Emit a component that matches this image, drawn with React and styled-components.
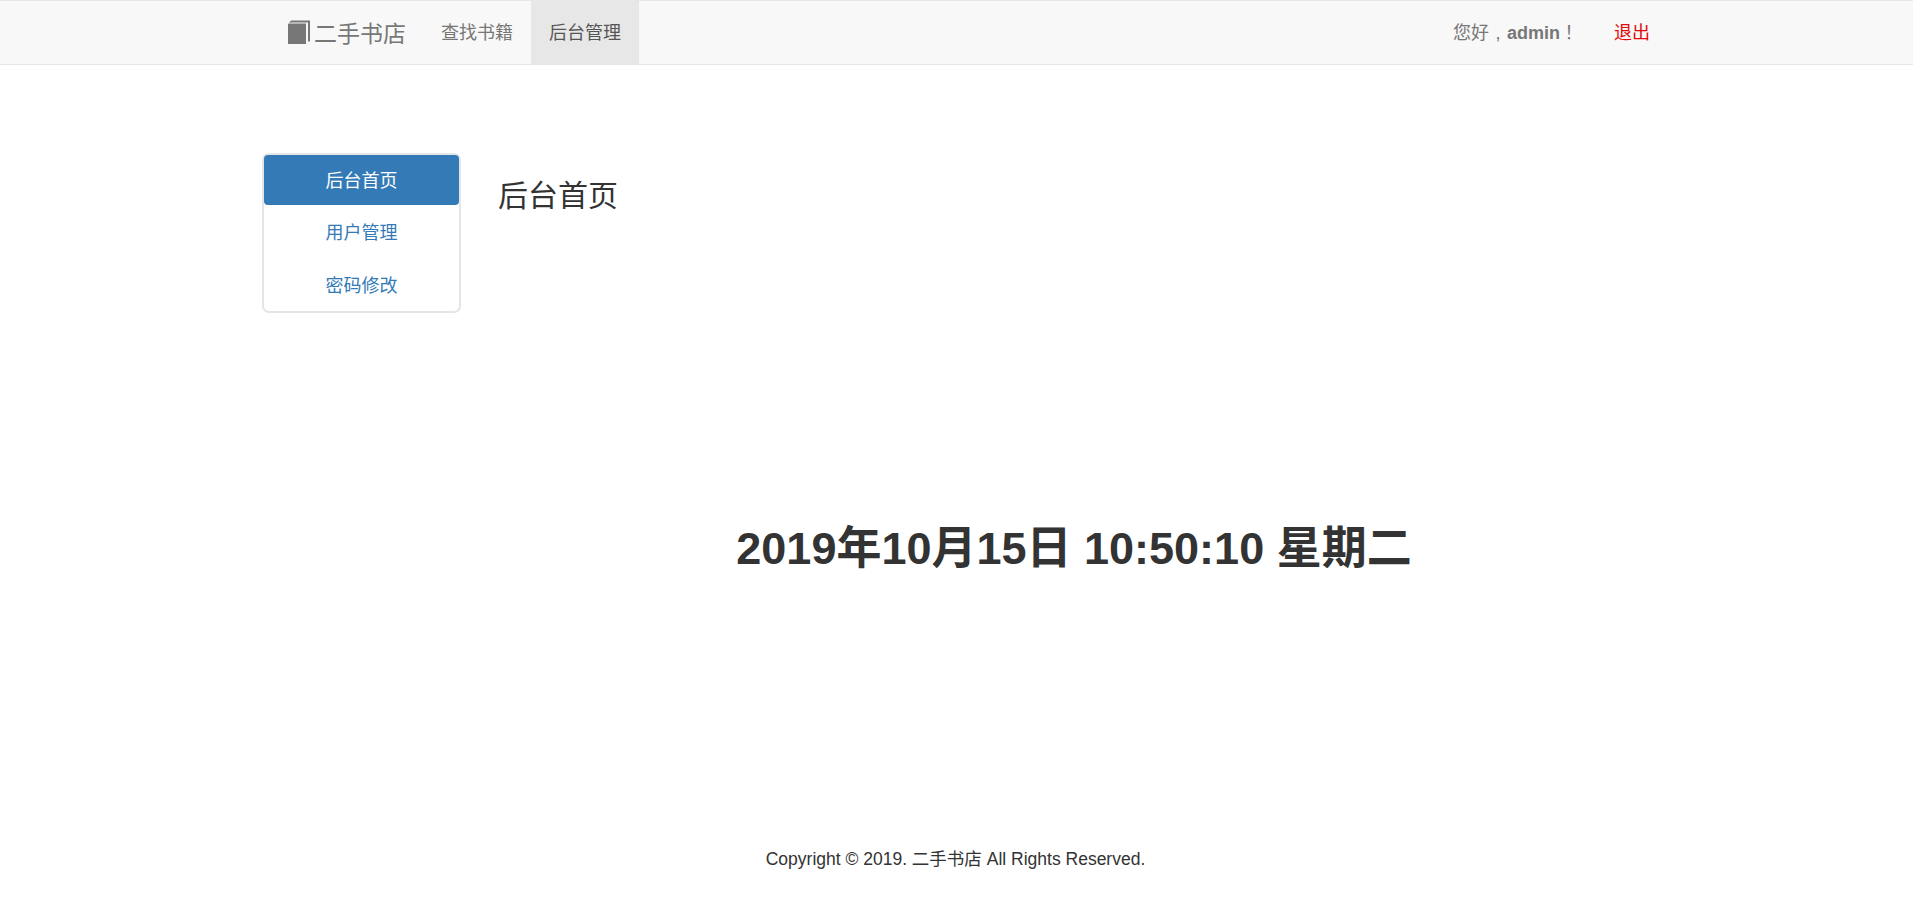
import React from "react";
import styled, { createGlobalStyle } from "styled-components";

const GlobalStyle = createGlobalStyle`
  html, body {
    margin: 0;
    padding: 0;
    background: #fff;
    color: #333;
    font-family: "Liberation Sans", "Noto Sans CJK SC", sans-serif;
    font-size: 18px;
  }
  * { box-sizing: border-box; }
`;

const Navbar = styled.nav`
  height: 65px;
  background: #f8f8f8;
  border-top: 1px solid #e7e7e7;
  border-bottom: 1px solid #e7e7e7;
`;

const NavInner = styled.div`
  display: flex;
  align-items: stretch;
  height: 100%;
  padding: 0 263px 0 288px;
`;

const Brand = styled.a`
  display: flex;
  align-items: center;
  gap: 4px;
  padding: 0 17px 2px 0;
  font-size: 23px;
  color: #777;
`;

const NavItem = styled.a`
  display: flex;
  align-items: center;
  padding: 0 18px 4px;
  font-size: 18px;
  color: ${(p) => (p.$active ? "#555" : "#777")};
  background: ${(p) => (p.$active ? "#e7e7e7" : "transparent")};
`;

const UserBox = styled.div`
  margin-left: auto;
  display: flex;
  align-items: center;
  gap: 36px;
  padding-bottom: 4px;
  font-size: 18px;
  color: #777;

  b { font-weight: 700; }
`;

const Comma = styled.span`
  padding: 0 6.5px;
`;

const Bang = styled.span`
  font-family: "Noto Sans CJK TC", sans-serif;
`;

const Logout = styled.a`
  color: #e00b0b;
`;

const Body = styled.div`
  display: grid;
  grid-template-columns: 199px 1fr;
  column-gap: 37px;
  padding: 88px 263px 0 262px;
`;

const Side = styled.ul`
  list-style: none;
  margin: 0;
  padding: 0;
  height: 160px;
  border: 2px solid #e3e5e8;
  border-radius: 7px;
`;

const SideItem = styled.li`
  display: flex;
  align-items: center;
  justify-content: center;
  height: ${(p) => (p.$active ? "50px" : "52.5px")};
  padding-bottom: ${(p) => (p.$active ? "2px" : "0")};
  border-radius: 4px;
  font-size: 18px;
  color: ${(p) => (p.$active ? "#fff" : "#337ab7")};
  background: ${(p) => (p.$active ? "#337ab7" : "transparent")};
`;

const Title = styled.h1`
  margin: 23px 0 0;
  font-size: 30px;
  font-weight: 400;
  line-height: 40px;
`;

const Clock = styled.h2`
  margin: 303px 0 0;
  text-align: center;
  font-size: 45px;
  font-weight: 700;
  line-height: 60px;
`;

const Footer = styled.footer`
  margin-top: 268px;
  padding-right: 2px;
  text-align: center;
  font-size: 17.5px;
  line-height: 24px;
  color: #333;
`;

const BookIcon = () => (
  <svg width="22" height="24" viewBox="0 0 22 24">
    <path d="M0 4.5Q0 3.500 1 3.500H18V24H0z" fill="#777" />
    <path d="M3 0.500H22V21.500H20V2.500H3L1 3z" fill="#777" />
  </svg>
);

export default function App() {
  return (
    <>
      <GlobalStyle />
      <Navbar>
        <NavInner>
          <Brand>
            <BookIcon />
            二手书店
          </Brand>
          <NavItem>查找书籍</NavItem>
          <NavItem $active>后台管理</NavItem>
          <UserBox>
            <span>
              您好<Comma>,</Comma>
              <b>admin</b>
              <Bang>！</Bang>
            </span>
            <Logout>退出</Logout>
          </UserBox>
        </NavInner>
      </Navbar>
      <Body>
        <Side>
          <SideItem $active>后台首页</SideItem>
          <SideItem>用户管理</SideItem>
          <SideItem>密码修改</SideItem>
        </Side>
        <div>
          <Title>后台首页</Title>
          <Clock>2019年10月15日 10:50:10 星期二</Clock>
        </div>
      </Body>
      <Footer>Copyright © 2019. 二手书店 All Rights Reserved.</Footer>
    </>
  );
}
